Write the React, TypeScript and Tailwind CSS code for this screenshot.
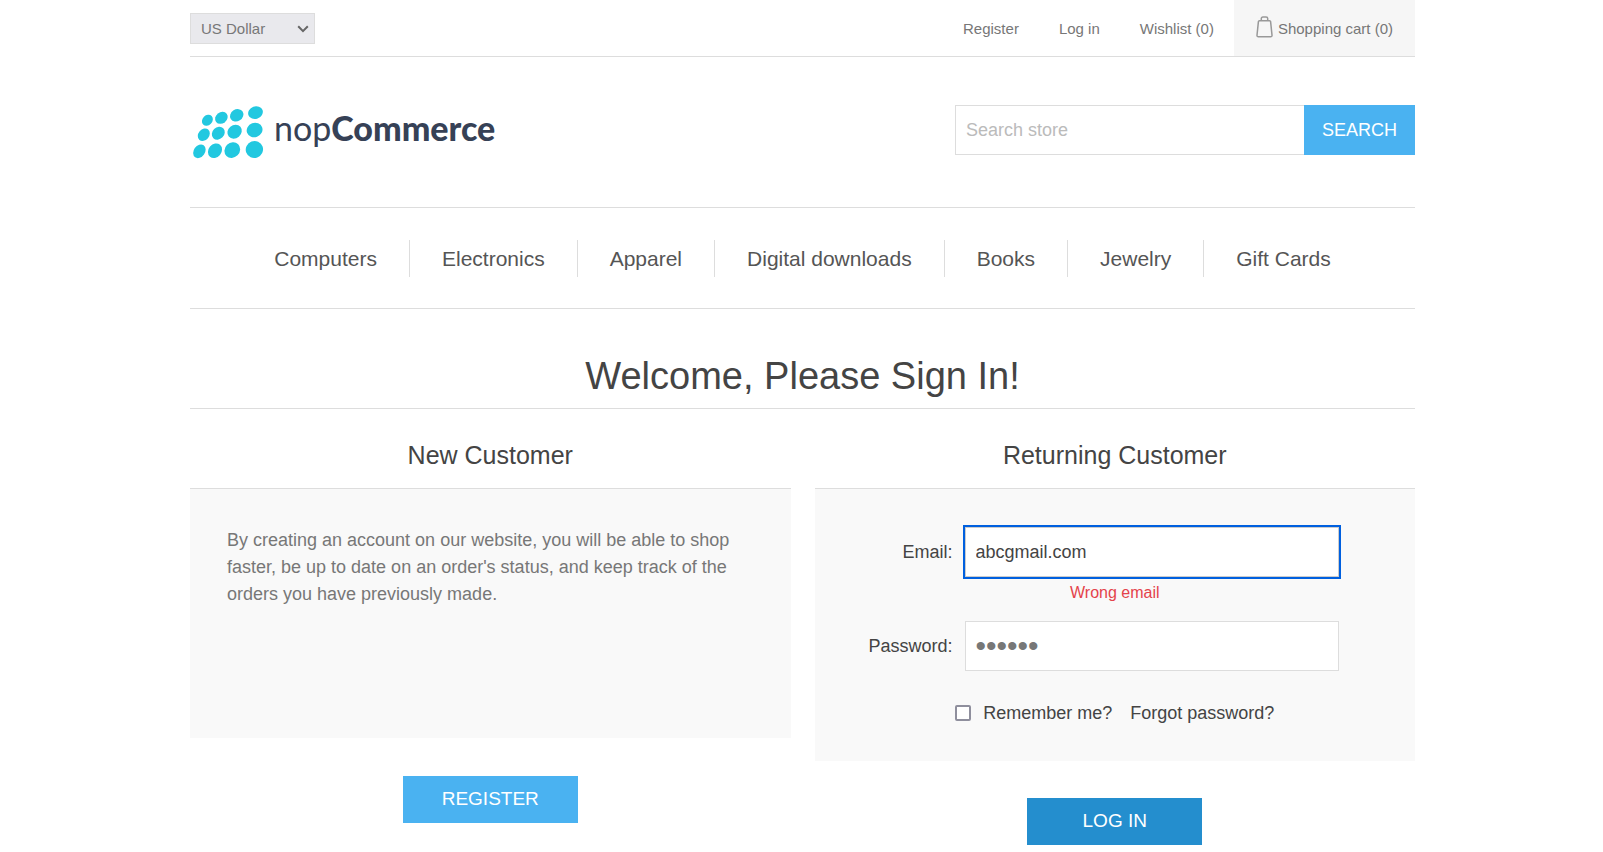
import { useState } from "react";

const categories = ["Computers", "Electronics", "Apparel", "Digital downloads", "Books", "Jewelry", "Gift Cards"];

const dots: [number, number, number, number, number][] = [
  [17.4, 20.2, 6, 4.9, -45],
  [31.4, 17.8, 6.7, 5.6, -38],
  [46.7, 15.3, 7, 5.9, -32],
  [65.5, 12.6, 7.5, 6.2, -20],
  [13.8, 34.7, 6.8, 5.4, -50],
  [28.3, 33.2, 7, 5.9, -45],
  [44.6, 31.7, 7.6, 6.6, -40],
  [64.6, 30, 8, 7.2, -20],
  [9.4, 51.3, 7.4, 5.6, -55],
  [25, 50.8, 7.8, 6.5, -50],
  [42.3, 50.1, 8.3, 7.4, -45],
  [64.4, 49.5, 8.7, 8.4, -20],
];

function Logo() {
  return (
    <a href="#" aria-label="nopCommerce" className="flex items-center">
      <svg viewBox="0 0 76 60" className="h-[60px] w-[76px]" fill="#22c8e0" aria-hidden="true">
        {dots.map(([x, y, rx, ry, r]) => (
          <ellipse key={`${x}-${y}`} cx={x} cy={y} rx={rx} ry={ry} transform={`rotate(${r} ${x} ${y})`} />
        ))}
      </svg>
      <span className="ml-2 pb-1 font-[Lato,sans-serif] text-[34px] leading-10 text-[#364156]">
        nop<span className="font-black">Commerce</span>
      </span>
    </a>
  );
}

function BagIcon() {
  return (
    <svg viewBox="0 0 17 22" className="h-[22px] w-[17px]" fill="none" stroke="#999" strokeWidth="1.5" aria-hidden="true">
      <path d="M3.400 4.800h10.200c.6 0 .9.3 1 .9l1.400 13.500c.1 1-.4 1.600-1.400 1.600H2.400c-1 0-1.500-.6-1.400-1.600L2.400 5.700c.1-.6.400-.9 1-.9z" />
      <path d="M5.300 5V2.600c0-1 .6-1.600 1.600-1.600h3.200c1 0 1.600.6 1.600 1.600V5" />
    </svg>
  );
}

export default function App() {
  const [email, setEmail] = useState("abcgmail.com");
  const [password, setPassword] = useState("secret");

  return (
    <div className="min-h-screen bg-white pl-0.5 font-['Liberation_Sans',Arial,sans-serif] text-[#444]">
      <div className="mx-auto w-full max-w-[1225px]">
        <div className="box-content flex h-14 items-stretch justify-between border-b border-[#ddd] text-[15px] text-[#777]">
          <div className="relative my-[13px] h-[31px] w-[125px]">
            <select
              aria-label="Currency"
              className="h-full w-full appearance-none border border-[#ddd] bg-[#e9e9ed] pt-0.5 pl-[10px] text-[15px] outline-none"
            >
              <option>US Dollar</option>
              <option>Euro</option>
            </select>
            <svg
              viewBox="0 0 12 8"
              className="pointer-events-none absolute top-3 right-[6px] h-2 w-3"
              fill="none"
              stroke="#666"
              strokeWidth="2"
              aria-hidden="true"
            >
              <path d="M1.200 1.300 6 6.100l4.800-4.800" />
            </svg>
          </div>
          <nav aria-label="Account" className="flex items-stretch">
            <a href="#" className="flex items-center px-5 pt-0.5">Register</a>
            <a href="#" className="flex items-center px-5 pt-0.5">Log in</a>
            <a href="#" className="flex items-center px-5 pt-0.5">Wishlist (0)</a>
            <a href="#" className="flex items-center gap-[5px] bg-[#f6f6f6] px-[22px] pt-0.5">
              <span className="pb-1"><BagIcon /></span>
              Shopping cart (0)
            </a>
          </nav>
        </div>

        <header className="flex items-start justify-between border-b border-[#ddd] pt-[43px] pb-[47px]">
          <Logo />
          <form className="mt-[5px] flex" onSubmit={(e) => e.preventDefault()}>
            <input
              type="text"
              aria-label="Search store"
              placeholder="Search store"
              className="h-[50px] w-[349px] border border-r-0 border-[#ddd] px-[10px] text-lg outline-none placeholder:text-[#bbb]"
            />
            <button type="submit" className="w-[111px] bg-[#4ab2f1] text-lg text-white">SEARCH</button>
          </form>
        </header>

        <nav aria-label="Categories" className="flex justify-center border-b border-[#ddd] pt-8 pb-[31px]">
          {categories.map((c) => (
            <a key={c} href="#" className="border-r border-[#ddd] px-8 text-[21px] leading-[37px] text-[#555] last:border-r-0">
              {c}
            </a>
          ))}
        </nav>

        <main>
          <h1 className="mt-[45px] border-b border-[#ddd] pb-[10px] text-center text-[38px] leading-[44px]">
            Welcome, Please Sign In!
          </h1>
          <div className="grid grid-cols-2 items-start gap-6">
            <section className="flex flex-col items-center">
              <h2 className="mt-[31px] mb-[18px] text-[25px] leading-[30px]">New Customer</h2>
              <div className="min-h-[250px] w-full border-t border-[#ddd] bg-[#f9f9f9] px-[37px] pt-[38px]">
                <p className="text-lg leading-[27px] text-[#777]">
                  By creating an account on our website, you will be able to shop faster, be up to date on an order's
                  status, and keep track of the orders you have previously made.
                </p>
              </div>
              <button type="button" className="mt-[38px] h-[47px] w-[175px] bg-[#4ab2f1] text-[19px] text-white">
                REGISTER
              </button>
            </section>

            <form className="flex flex-col items-center" onSubmit={(e) => e.preventDefault()}>
              <h2 className="mt-[31px] mb-[18px] text-[25px] leading-[30px]">Returning Customer</h2>
              <div className="w-full border-t border-[#ddd] bg-[#f9f9f9] pt-[38px] pb-9 text-lg">
                <div className="grid grid-cols-[138px_1fr] items-center gap-3 pr-[76px]">
                  <label htmlFor="email" className="text-right">Email:</label>
                  <input
                    id="email"
                    type="text"
                    value={email}
                    onChange={(e) => setEmail(e.target.value)}
                    className="h-[50px] w-full border border-[#ccc] bg-white px-[10px] outline-2 outline-[#0060df]"
                  />
                </div>
                <p className="mt-[6px] mb-[18px] text-center text-base leading-5 text-[#e4434b]">Wrong email</p>
                <div className="grid grid-cols-[138px_1fr] items-center gap-3 pr-[76px]">
                  <label htmlFor="password" className="text-right">Password:</label>
                  <input
                    id="password"
                    type="password"
                    value={password}
                    onChange={(e) => setPassword(e.target.value)}
                    className="h-[50px] w-full border border-[#ddd] bg-white px-[10px] text-3xl text-[#777] outline-none"
                  />
                </div>
                <div className="mt-[30px] flex items-center justify-center gap-[18px] leading-6">
                  <label className="flex items-center gap-3">
                    <input
                      type="checkbox"
                      className="size-4 appearance-none rounded-[2px] border-2 border-[#8f8f9d] bg-white checked:bg-[#0060df]"
                    />
                    Remember me?
                  </label>
                  <a href="#">Forgot password?</a>
                </div>
              </div>
              <button type="submit" className="mt-[37px] mb-[7px] h-[47px] w-[175px] bg-[#248ece] text-[19px] text-white">
                LOG IN
              </button>
            </form>
          </div>
        </main>
      </div>
    </div>
  );
}
